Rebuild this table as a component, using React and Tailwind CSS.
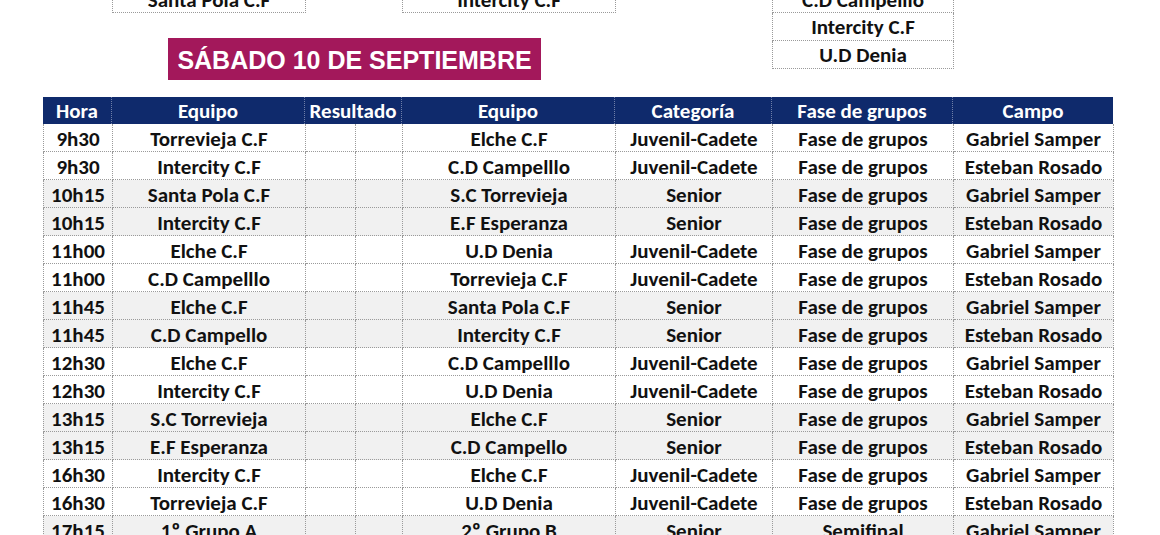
import React from "react";

const rows = [
  ["9h30", "Torrevieja C.F", "Elche C.F", "Juvenil-Cadete", "Fase de grupos", "Gabriel Samper"],
  ["9h30", "Intercity C.F", "C.D Campelllo", "Juvenil-Cadete", "Fase de grupos", "Esteban Rosado"],
  ["10h15", "Santa Pola C.F", "S.C Torrevieja", "Senior", "Fase de grupos", "Gabriel Samper"],
  ["10h15", "Intercity C.F", "E.F Esperanza", "Senior", "Fase de grupos", "Esteban Rosado"],
  ["11h00", "Elche C.F", "U.D Denia", "Juvenil-Cadete", "Fase de grupos", "Gabriel Samper"],
  ["11h00", "C.D Campelllo", "Torrevieja C.F", "Juvenil-Cadete", "Fase de grupos", "Esteban Rosado"],
  ["11h45", "Elche C.F", "Santa Pola C.F", "Senior", "Fase de grupos", "Gabriel Samper"],
  ["11h45", "C.D Campello", "Intercity C.F", "Senior", "Fase de grupos", "Esteban Rosado"],
  ["12h30", "Elche C.F", "C.D Campelllo", "Juvenil-Cadete", "Fase de grupos", "Gabriel Samper"],
  ["12h30", "Intercity C.F", "U.D Denia", "Juvenil-Cadete", "Fase de grupos", "Esteban Rosado"],
  ["13h15", "S.C Torrevieja", "Elche C.F", "Senior", "Fase de grupos", "Gabriel Samper"],
  ["13h15", "E.F Esperanza", "C.D Campello", "Senior", "Fase de grupos", "Esteban Rosado"],
  ["16h30", "Intercity C.F", "Elche C.F", "Juvenil-Cadete", "Fase de grupos", "Gabriel Samper"],
  ["16h30", "Torrevieja C.F", "U.D Denia", "Juvenil-Cadete", "Fase de grupos", "Esteban Rosado"],
  ["17h15", "1º Grupo A", "2º Grupo B", "Senior", "Semifinal", "Gabriel Samper"],
];

const cols = "grid grid-cols-[69px_193px_50px_47px_213px_157px_181px_160px]";
const cell = "flex items-center justify-center pt-[3px] border-r border-b border-dotted border-[#9a9a9a] whitespace-nowrap";

const TopBox = ({ children, first }) => (
  <div className={`h-[28px] pt-[2px] flex items-center justify-center border border-dotted border-[#9a9a9a] bg-white ${first ? "" : "border-t-0"}`}>
    {children}
  </div>
);

export default function App() {
  return (
    <div
      className="w-[1160px] h-[535px] overflow-hidden bg-white text-[#111] font-bold text-[21px] leading-none"
      style={{ fontFamily: "Carlito, 'Open Sans', sans-serif" }}
    >
      {/* top: groups remnant + day title */}
      <div className="-mt-[15px] h-[112px] flex">
        <div className="w-[772px] flex flex-col">
          <div className="flex pl-[112px]">
            <div className="w-[194px]">
              <TopBox first>Santa Pola C.F</TopBox>
            </div>
            <div className="w-[96px]" />
            <div className="w-[214px]">
              <TopBox first>Intercity C.F</TopBox>
            </div>
          </div>
          <div className="mt-[25px] ml-[168px] w-[373px] h-[42px] pt-[2px] bg-[#a3185b] text-white flex items-center justify-center text-[25px] font-bold font-['Liberation_Sans',Arial,sans-serif]">
            SÁBADO 10 DE SEPTIEMBRE
          </div>
        </div>
        <div className="w-[182px] flex flex-col">
          <TopBox first>C.D Campelllo</TopBox>
          <TopBox>Intercity C.F</TopBox>
          <TopBox>U.D Denia</TopBox>
        </div>
      </div>

      {/* schedule table */}
      <div className="ml-[43px] w-[1070px]">
        <div className={`${cols} h-[27px] bg-[#0f2a6c] text-white`}>
          {["Hora", "Equipo"].map((h) => (
            <div key={h} className="flex items-center justify-center pt-[2px] border-r border-dotted border-[#6f7fa8]">{h}</div>
          ))}
          <div className="col-span-2 flex items-center justify-center pt-[2px] border-r border-dotted border-[#6f7fa8]">Resultado</div>
          {["Equipo", "Categoría", "Fase de grupos"].map((h) => (
            <div key={h} className="flex items-center justify-center pt-[2px] border-r border-dotted border-[#6f7fa8]">{h}</div>
          ))}
          <div className="flex items-center justify-center pt-[2px]">Campo</div>
        </div>
        {rows.map((r, i) => (
          <div
            key={i}
            className={`${cols} h-[28px] border-l border-dotted border-[#9a9a9a] ${Math.floor(i / 2) % 2 === 1 ? "bg-[#f1f1f1]" : "bg-white"}`}
          >
            <div className={cell}>{r[0]}</div>
            <div className={cell}>{r[1]}</div>
            <div className={cell}></div>
            <div className={cell}></div>
            <div className={cell}>{r[2]}</div>
            <div className={cell}>{r[3]}</div>
            <div className={cell}>{r[4]}</div>
            <div className={cell}>{r[5]}</div>
          </div>
        ))}
      </div>
    </div>
  );
}
